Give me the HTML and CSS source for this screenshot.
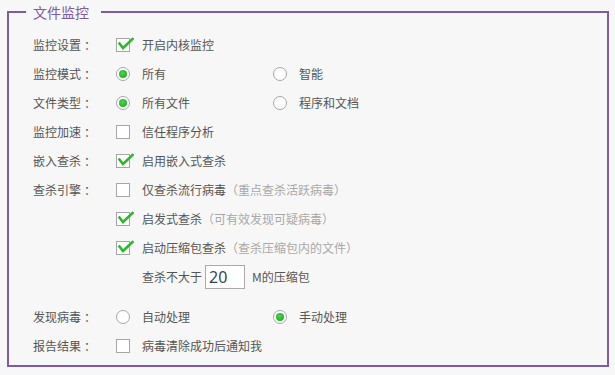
FILE: index.html
```html
<!DOCTYPE html>
<html lang="zh-CN">
<head>
<meta charset="utf-8">
<title>文件监控</title>
<link rel="stylesheet" href="styles.css">
</head>
<body>
<fieldset class="panel">
  <legend class="panel-title">文件监控</legend>

  <div class="row">
    <span class="label">监控设置<span class="colon">：</span></span>
    <span class="opt"><span class="cb checked"><svg viewBox="0 0 18 14"><path d="M3.5 5.5 L7 10 L16.5 1"/></svg></span>开启内核监控</span>
  </div>

  <div class="row">
    <span class="label">监控模式<span class="colon">：</span></span>
    <span class="opt col"><span class="rb checked"></span>所有</span>
    <span class="opt"><span class="rb"></span>智能</span>
  </div>

  <div class="row">
    <span class="label">文件类型<span class="colon">：</span></span>
    <span class="opt col"><span class="rb checked"></span>所有文件</span>
    <span class="opt"><span class="rb"></span>程序和文档</span>
  </div>

  <div class="row">
    <span class="label">监控加速<span class="colon">：</span></span>
    <span class="opt"><span class="cb"></span>信任程序分析</span>
  </div>

  <div class="row">
    <span class="label">嵌入查杀<span class="colon">：</span></span>
    <span class="opt"><span class="cb checked"><svg viewBox="0 0 18 14"><path d="M3.5 5.5 L7 10 L16.5 1"/></svg></span>启用嵌入式查杀</span>
  </div>

  <div class="row">
    <span class="label">查杀引擎<span class="colon">：</span></span>
    <span class="opt"><span class="cb"></span>仅查杀流行病毒<span class="hint">（重点查杀活跃病毒）</span></span>
  </div>

  <div class="row">
    <span class="label"></span>
    <span class="opt"><span class="cb checked"><svg viewBox="0 0 18 14"><path d="M3.5 5.5 L7 10 L16.5 1"/></svg></span>启发式查杀<span class="hint">（可有效发现可疑病毒）</span></span>
  </div>

  <div class="row">
    <span class="label"></span>
    <span class="opt"><span class="cb checked"><svg viewBox="0 0 18 14"><path d="M3.5 5.5 L7 10 L16.5 1"/></svg></span>启动压缩包查杀<span class="hint">（查杀压缩包内的文件）</span></span>
  </div>

  <div class="row">
    <span class="label"></span>
    <span class="size">查杀不大于<input class="num" type="text" value="20">M的压缩包</span>
  </div>

  <div class="row gap-row">
    <span class="label">发现病毒<span class="colon">：</span></span>
    <span class="opt col"><span class="rb"></span>自动处理</span>
    <span class="opt"><span class="rb checked"></span>手动处理</span>
  </div>

  <div class="row">
    <span class="label">报告结果<span class="colon">：</span></span>
    <span class="opt"><span class="cb"></span>病毒清除成功后通知我</span>
  </div>
</fieldset>
</body>
</html>
```

FILE: styles.css
```css
html, body {
  margin: 0;
  padding: 0;
  background: #f7f7f7;
}

body {
  font-family: "Noto Sans CJK SC", "Microsoft YaHei", sans-serif;
  font-size: 12px;
  color: #555;
}

.panel {
  box-sizing: border-box;
  margin: 0 0 0 7px;
  width: 602px;
  height: 367px;
  border: 2px solid #7d5ba6;
  padding: 6px 0 0 0;
  min-width: 0;
}

.panel-title {
  margin-left: 17px;
  padding: 0 12px 0 7px;
  font-size: 14px;
  line-height: 24px;
  color: #7d5ba6;
}

.row {
  display: flex;
  align-items: center;
  height: 29px;
  margin-left: 24px;
}

.label {
  width: 83px;
  flex: none;
}

.colon {
  margin-left: 3px;
}

.opt {
  display: flex;
  align-items: center;
}

.opt.col {
  width: 157px;
}

.cb {
  position: relative;
  box-sizing: border-box;
  width: 14px;
  height: 14px;
  border: 1px solid #a6a6a6;
  background: #fff;
  margin-right: 12px;
  flex: none;
}

.cb svg {
  position: absolute;
  left: -1px;
  top: -1px;
  width: 18px;
  height: 14px;
  overflow: visible;
}

.cb svg path {
  fill: none;
  stroke: #2fb52f;
  stroke-width: 2.6;
  stroke-linecap: square;
  stroke-linejoin: miter;
}

.rb {
  position: relative;
  box-sizing: border-box;
  width: 14px;
  height: 14px;
  border: 1px solid #a6a6a6;
  border-radius: 50%;
  background: #fff;
  margin-right: 12px;
  flex: none;
}

.rb.checked::after {
  content: "";
  position: absolute;
  left: 2px;
  top: 2px;
  width: 8px;
  height: 8px;
  border-radius: 50%;
  background: radial-gradient(circle at 45% 40%, #4fd44f 0, #2cb52c 60%, #1f9a1f 100%);
}

.hint {
  color: #a8a8a8;
}

.size {
  display: flex;
  align-items: center;
  padding-left: 26px;
}

.num {
  box-sizing: border-box;
  width: 40px;
  height: 24px;
  margin: 0 7px 0 3px;
  padding: 0 0 0 3px;
  border: 1px solid #aaa;
  background: #fff;
  font-family: "Noto Sans", "Open Sans", sans-serif;
  font-size: 16px;
  color: #3a3f55;
  outline: none;
}

.gap-row {
  margin-top: 11px;
}
```
